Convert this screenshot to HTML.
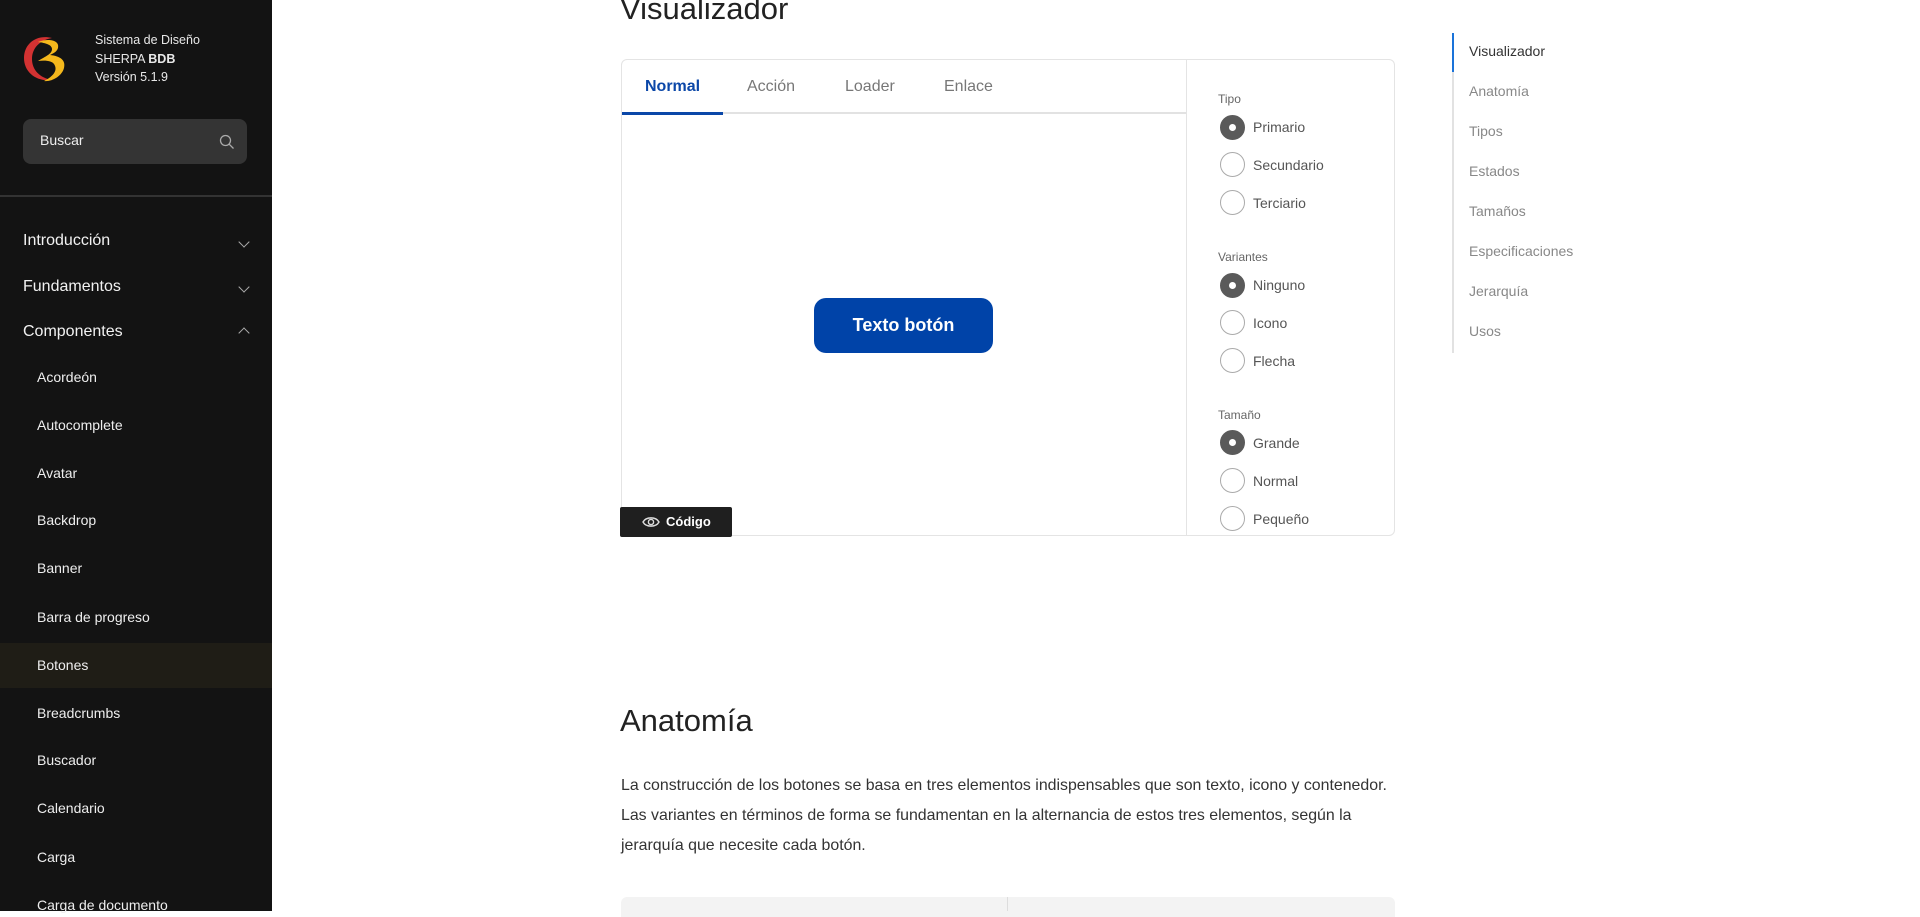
<!DOCTYPE html>
<html><head><meta charset="utf-8"><style>
*{box-sizing:border-box;margin:0;padding:0}
body{width:1920px;height:911px;overflow:hidden;background:#fff;font-family:"Liberation Sans",sans-serif;position:relative}
.sb{position:absolute;left:0;top:0;width:272px;height:911px;background:#131313;color:#fff}
.abs{position:absolute;white-space:nowrap}
.brand{left:95px;font-size:12.5px;color:#e8e8e8}
.search{left:23px;top:119px;width:224px;height:45px;background:#343434;border-radius:8px}
.menu{left:23px;font-size:16px;color:#f2f2f2}
.sub{left:37px;font-size:14px;color:#eee}
.chev{position:absolute;left:240px;width:8px;height:8px;border-right:1.3px solid #aaa;border-bottom:1.3px solid #aaa}
.card{position:absolute;left:621px;top:59px;width:774px;height:477px;border:1px solid #e4e4e4;border-radius:6px}
.tab{top:78px;font-size:16px;color:#777}
.lbl{left:1218px;font-size:12px;color:#666}
.rad{position:absolute;left:1220px;width:25px;height:25px;border-radius:50%;border:1.3px solid #aaa;background:#fff}
.rad.on{background:#5a5a5a;border-color:#5a5a5a}
.rad.on:after{content:"";position:absolute;left:8px;top:8px;width:7px;height:7px;border-radius:50%;background:#fff}
.rt{left:1253px;font-size:14px;color:#555}
.toc{left:1469px;font-size:14px;color:#888}
</style></head><body>
<div class="sb">
<svg class="abs" style="left:22px;top:34px" width="50" height="50" viewBox="0 0 50 50">
<path d="M30 4 C14 0 2 10 2 24 C2 38 14 48 30 46 C18 44 10 36 10 25 C10 14 18 6 30 4Z" fill="#d33232"/>
<path d="M16 8 C26 4 38 6 36 14 C35 18 30 20 28 21 C38 22 44 26 42 34 C40 42 30 48 22 47 C32 42 36 36 32 30 C30 27 24 26 16 27 C24 22 30 20 30 15 C30 11 24 9 16 8Z" fill="#f4b81c"/>
</svg>
<div class="abs brand" style="top:33px">Sistema de Diseño</div>
<div class="abs brand" style="top:52px">SHERPA <b>BDB</b></div>
<div class="abs brand" style="top:70px">Versión 5.1.9</div>
<div class="abs search"></div>
<div class="abs" style="left:40px;top:132px;font-size:14px;color:#eee">Buscar</div>
<svg class="abs" style="left:219px;top:134px" width="16" height="16" viewBox="0 0 16 16"><circle cx="6.5" cy="6.5" r="5" fill="none" stroke="#aaa" stroke-width="1.3"/><path d="M10.2 10.2L14.5 14.5" stroke="#aaa" stroke-width="1.3"/></svg>
<div class="abs" style="left:0;top:195px;width:272px;height:2px;background:#333"></div>
<div class="abs menu" style="top:232px">Introducción</div><div class="chev" style="top:238px;transform:rotate(45deg)"></div>
<div class="abs menu" style="top:278px">Fundamentos</div><div class="chev" style="top:283px;transform:rotate(45deg)"></div>
<div class="abs menu" style="top:323px">Componentes</div><div class="chev" style="top:329px;transform:rotate(-135deg)"></div>
<div class="abs" style="left:0;top:643px;width:272px;height:45px;background:#1f1d16"></div>
<div class="abs sub" style="top:369px">Acordeón</div>
<div class="abs sub" style="top:417px">Autocomplete</div>
<div class="abs sub" style="top:465px">Avatar</div>
<div class="abs sub" style="top:512px">Backdrop</div>
<div class="abs sub" style="top:560px">Banner</div>
<div class="abs sub" style="top:609px">Barra de progreso</div>
<div class="abs sub" style="top:657px">Botones</div>
<div class="abs sub" style="top:705px">Breadcrumbs</div>
<div class="abs sub" style="top:752px">Buscador</div>
<div class="abs sub" style="top:800px">Calendario</div>
<div class="abs sub" style="top:849px">Carga</div>
<div class="abs sub" style="top:897px">Carga de documento</div>
</div>

<div class="abs" style="left:620px;top:-9px;font-size:31px;color:#222">Visualizador</div>
<div class="card"></div>
<div class="abs" style="left:1186px;top:59px;width:1px;height:477px;background:#e4e4e4"></div>
<div class="abs" style="left:622px;top:112px;width:564px;height:2px;background:#e2e2e2"></div>
<div class="abs" style="left:622px;top:112px;width:101px;height:3px;background:#0b47a8"></div>
<div class="abs tab" style="left:645px;color:#0b47a8;font-weight:bold">Normal</div>
<div class="abs tab" style="left:747px">Acción</div>
<div class="abs tab" style="left:845px">Loader</div>
<div class="abs tab" style="left:944px">Enlace</div>
<div class="abs" style="left:814px;top:298px;width:179px;height:55px;background:#0043a8;border-radius:12px;color:#fff;font-weight:bold;font-size:18px;text-align:center;line-height:55px">Texto botón</div>
<div class="abs" style="left:620px;top:507px;width:112px;height:30px;background:#1f1f1f;border-radius:2px;color:#fff;font-size:13px;font-weight:bold;line-height:30px;padding-left:46px">Código</div>
<svg class="abs" style="left:642px;top:515px" width="18" height="14" viewBox="0 0 18 14"><path d="M1 7C4 1.5 14 1.5 17 7C14 12.5 4 12.5 1 7Z" fill="none" stroke="#ddd" stroke-width="1.4"/><circle cx="9" cy="7" r="2.6" fill="none" stroke="#ddd" stroke-width="1.4"/></svg>

<div class="abs lbl" style="top:92px">Tipo</div>
<div class="rad on" style="top:115px"></div><div class="abs rt" style="top:119px">Primario</div>
<div class="rad" style="top:152px"></div><div class="abs rt" style="top:157px">Secundario</div>
<div class="rad" style="top:190px"></div><div class="abs rt" style="top:195px">Terciario</div>
<div class="abs lbl" style="top:250px">Variantes</div>
<div class="rad on" style="top:273px"></div><div class="abs rt" style="top:277px">Ninguno</div>
<div class="rad" style="top:310px"></div><div class="abs rt" style="top:315px">Icono</div>
<div class="rad" style="top:348px"></div><div class="abs rt" style="top:353px">Flecha</div>
<div class="abs lbl" style="top:408px">Tamaño</div>
<div class="rad on" style="top:430px"></div><div class="abs rt" style="top:435px">Grande</div>
<div class="rad" style="top:468px"></div><div class="abs rt" style="top:473px">Normal</div>
<div class="rad" style="top:506px"></div><div class="abs rt" style="top:511px">Pequeño</div>

<div class="abs" style="left:1452px;top:33px;width:2px;height:320px;background:#e2e2e2"></div>
<div class="abs" style="left:1452px;top:33px;width:2px;height:39px;background:#1a73d9"></div>
<div class="abs toc" style="top:43px;color:#333">Visualizador</div>
<div class="abs toc" style="top:83px">Anatomía</div>
<div class="abs toc" style="top:123px">Tipos</div>
<div class="abs toc" style="top:163px">Estados</div>
<div class="abs toc" style="top:203px">Tamaños</div>
<div class="abs toc" style="top:243px">Especificaciones</div>
<div class="abs toc" style="top:283px">Jerarquía</div>
<div class="abs toc" style="top:323px">Usos</div>

<div class="abs" style="left:620px;top:703px;font-size:31px;color:#222">Anatomía</div>
<div class="abs" style="left:621px;top:771px;font-size:15.9px;color:#333;line-height:30px">La construcción de los botones se basa en tres elementos indispensables que son texto, icono y contenedor.<br>Las variantes en términos de forma se fundamentan en la alternancia de estos tres elementos, según la<br>jerarquía que necesite cada botón.</div>
<div class="abs" style="left:621px;top:897px;width:774px;height:20px;background:#f3f3f3;border-radius:6px 6px 0 0"></div>
<div class="abs" style="left:1007px;top:897px;width:1px;height:14px;background:#ddd"></div>
</body></html>
